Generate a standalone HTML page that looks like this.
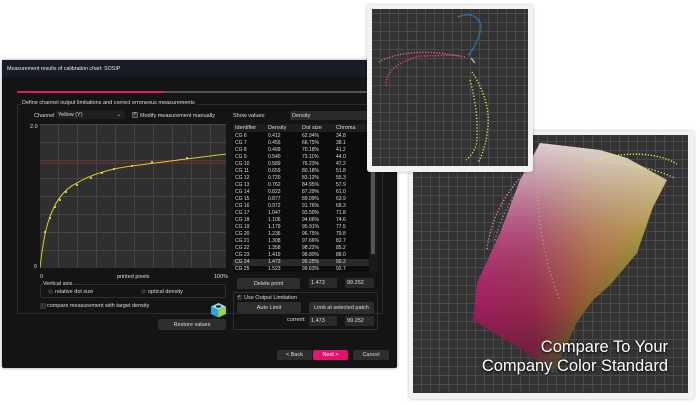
<!DOCTYPE html>
<html><head><meta charset="utf-8"><style>
*{margin:0;padding:0;box-sizing:border-box}
body{width:700px;height:405px;background:#fff;position:relative;overflow:hidden;font-family:"Liberation Sans",sans-serif;}
.a{position:absolute}
.t{position:absolute;color:#ddd;font-size:5.5px;white-space:nowrap;line-height:1}
.btn{position:absolute;background:#2e2e2e;border-radius:2px;color:#ddd;font-size:5.5px;text-align:center;display:flex;align-items:center;justify-content:center}
.fld{position:absolute;background:#2a2a2a;color:#ddd;font-size:5.5px;padding-left:2px;display:flex;align-items:center;border-radius:1px}
.grid{background-color:#383838;background-image:repeating-linear-gradient(0deg,transparent 0 8px,#4a4a4a 8px 9px),repeating-linear-gradient(90deg,transparent 0 8px,#4a4a4a 8px 9px)}
</style></head><body>
<div class="a" style="left:2px;top:60px;width:395px;height:308px;background:#141414;border-radius:2px;box-shadow:0 0 3px rgba(0,0,0,.4)"></div>
<div class="a" style="left:2px;top:60px;width:395px;height:17px;background:#181c24"></div>
<div class="t" style="left:7px;top:67px;font-size:5.3px;color:#e8e8e8">Measurement results of calibration chart: SOSIP</div>
<div class="a" style="left:17px;top:91px;width:366px;height:2px;background:#555"></div>
<div class="a" style="left:17px;top:91px;width:146px;height:2px;background:#e01a6a"></div>
<div class="a" style="left:17px;top:104px;width:366px;height:210px;border:1px solid #2c2c2c"></div>
<div class="t" style="left:21px;top:101px;background:#141414;padding:0 1px">Define channel output limitations and correct erroneous measurements</div>
<div class="t" style="left:34px;top:114px">Channel</div>
<div class="fld" style="left:56px;top:110px;width:69px;height:9px;background:#1f1f1f">Yellow (Y)<span style="position:absolute;right:4px;font-size:5px">⌄</span></div>
<div class="a" style="left:132px;top:112px;width:6px;height:6px;background:#333;border:1px solid #666"></div>
<div class="t" style="left:133px;top:112px;font-size:5px">✓</div>
<div class="t" style="left:140px;top:114px">Modify measurement manually</div>
<div class="t" style="left:30px;top:125px">2.0</div>
<div class="t" style="left:34px;top:265px">0</div>
<div class="a" style="left:40px;top:124px;width:186px;height:144px;background-image:repeating-linear-gradient(0deg,transparent 0 17px,#454545 17px 18px),repeating-linear-gradient(90deg,transparent 0 18px,#454545 18px 19px);background-color:#2f2f2f"></div>
<svg class="a" style="left:40px;top:124px" width="186" height="144" viewBox="40 124 186 144">
<line x1="40" y1="163" x2="226" y2="163" stroke="#c02020" stroke-width=".7"/>
<path d="M40 268 C42 250 44 238 46 230 C52 205 62 190 77 183 C95 172 120 167 140 165 C170 161 200 157 227 154" fill="none" stroke="#d8d020" stroke-width="1"/>
<g fill="#f0ee80"><circle cx="45" cy="232" r="1"/><circle cx="50" cy="218" r="1"/><circle cx="55" cy="207" r="1"/><circle cx="60" cy="200" r="1"/><circle cx="66" cy="192" r="1"/><circle cx="77" cy="185" r="1"/><circle cx="91" cy="178" r="1"/><circle cx="102" cy="173" r="1"/><circle cx="114" cy="169" r="1"/><circle cx="132" cy="166" r="1"/><circle cx="152" cy="162" r="1"/><circle cx="187" cy="158" r="1"/><circle cx="227" cy="154" r="1"/></g>
</svg>
<div class="t" style="left:40px;top:275px">0</div>
<div class="t" style="left:117px;top:275px">printed pixels</div>
<div class="t" style="left:214px;top:275px">100%</div>
<div class="a" style="left:40px;top:284px;width:186px;height:14px;border:1px solid #2e2e2e;border-radius:2px"></div>
<div class="t" style="left:43px;top:282px;background:#141414">Vertical axis</div>
<div class="a" style="left:48px;top:289px;width:5px;height:5px;border-radius:50%;background:#333"></div>
<div class="t" style="left:55px;top:290px">relative dot size</div>
<div class="a" style="left:141px;top:289px;width:5px;height:5px;border-radius:50%;background:#333"></div>
<div class="t" style="left:148px;top:290px">optical density</div>
<div class="a" style="left:40px;top:303px;width:6px;height:6px;background:#333"></div>
<div class="t" style="left:47px;top:304px">compare measurement with target density</div>
<svg class="a" style="left:210px;top:302px" width="17" height="16" viewBox="0 0 17 16">
<polygon points="8.5,1 16,4.5 8.5,8 1,4.5" fill="#8fe0f0"/><polygon points="1,4.5 8.5,8 8.5,15.5 1,12" fill="#28a8e0"/><polygon points="16,4.5 8.5,8 8.5,15.5 16,12" fill="#a8d030"/><ellipse cx="8.5" cy="4.5" rx="2.5" ry="1.2" fill="#1a1a1a"/></svg>
<div class="btn" style="left:158px;top:319px;width:68px;height:11px">Restore values</div>
<div class="t" style="left:233px;top:114px">Show values:</div>
<div class="fld" style="left:290px;top:111px;width:80px;height:9px">Density</div>
<div class="a" style="left:233px;top:124px;width:136px;height:148px;background:#0c0c0c"></div>
<div class="a" style="left:233px;top:124px;width:136px;height:8px;background:#1e1e1e"></div>
<div class="a" style="left:233px;top:259px;width:136px;height:7px;background:#2a2a2a"></div>
<div class="a" style="left:370px;top:124px;width:7px;height:148px;background:#1a1a1a"></div>
<div class="a" style="left:371px;top:126px;width:4px;height:128px;background:#555"></div>
<div id="tbl"></div>
<div class="btn" style="left:237px;top:278px;width:63px;height:11px">Delete point</div>
<div class="fld" style="left:309px;top:278px;width:28px;height:10px">1.473</div>
<div class="fld" style="left:345px;top:278px;width:29px;height:10px">99.252</div>
<div class="a" style="left:233px;top:292px;width:145px;height:38px;border:1px solid #2e2e2e;border-radius:2px"></div>
<div class="a" style="left:237px;top:295px;width:5px;height:5px;background:#333"></div>
<div class="t" style="left:237px;top:295px;font-size:5px">✓</div>
<div class="t" style="left:244px;top:296px">Use Output Limitation</div>
<div class="btn" style="left:237px;top:302px;width:64px;height:11px">Auto Limit</div>
<div class="btn" style="left:309px;top:302px;width:65px;height:11px">Limit at selected patch</div>
<div class="t" style="left:287px;top:318px">current:</div>
<div class="fld" style="left:309px;top:316px;width:28px;height:10px">1.473</div>
<div class="fld" style="left:345px;top:316px;width:29px;height:10px">99.252</div>
<div class="btn" style="left:277px;top:350px;width:35px;height:10px">&lt; Back</div>
<div class="btn" style="left:313px;top:350px;width:35px;height:10px;background:#e0146c;color:#fff">Next &gt;</div>
<div class="btn" style="left:353px;top:350px;width:36px;height:10px">Cancel</div>

<div class="a" style="left:409px;top:131px;width:285px;height:268px;background:#f2f2f2;border-radius:3px;box-shadow:0 0 3px rgba(0,0,0,.25)"></div>
<div class="a grid" style="left:413px;top:135px;width:275px;height:258px;background-color:#333"></div>
<svg class="a" style="left:413px;top:135px" width="275" height="258" viewBox="413 135 275 258">
<defs>
<linearGradient id="g1" x1="0" y1="0" x2="1" y2="0"><stop offset="0" stop-color="#c0207a"/><stop offset=".3" stop-color="#b03060"/><stop offset=".6" stop-color="#b87040"/><stop offset="1" stop-color="#c09a20"/></linearGradient>
<linearGradient id="g2" x1="0" y1="0" x2="0" y2="1"><stop offset="0" stop-color="#e8e8e8" stop-opacity=".85"/><stop offset=".4" stop-color="#ccc" stop-opacity=".2"/><stop offset=".7" stop-color="#400" stop-opacity=".15"/><stop offset="1" stop-color="#301030" stop-opacity=".6"/></linearGradient>
<linearGradient id="g3" x1="0" y1="0" x2="1" y2="1"><stop offset=".6" stop-color="#0a0" stop-opacity="0"/><stop offset=".8" stop-color="#2a9a30" stop-opacity=".55"/><stop offset="1" stop-color="#2a9a30" stop-opacity="0"/></linearGradient>
</defs>
<g id="bl">
<polygon points="540,143 600,150 627,158 667,180 653,207 637,253 610,285 593,300 577,322 553,373 527,353 473,320 477,283 500,233 520,180" fill="url(#g1)" opacity=".9"/>
<polygon points="540,143 600,150 627,158 667,180 653,207 637,253 610,285 593,300 577,322 553,373 527,353 473,320 477,283 500,233 520,180" fill="url(#g2)"/>
<polygon points="540,143 600,150 627,158 667,180 653,207 637,253 610,285 593,300 577,322 553,373 527,353 473,320 477,283 500,233 520,180" fill="url(#g3)"/>
</g>
<path d="M585 161 Q640 162 675 178" fill="none" stroke="#f0e070" stroke-width="1.3" stroke-dasharray="1.2 2"/>
<path d="M600 158 Q650 148 677 164" fill="none" stroke="#f0f040" stroke-width="1.4" stroke-dasharray="1.2 1.8"/>
<path d="M487 249 Q492 210 520 178" fill="none" stroke="#f080c0" stroke-width="1.4" stroke-dasharray="1.2 2"/>
<path d="M495 240 Q505 200 535 170" fill="none" stroke="#c0a0d0" stroke-width="1.1" stroke-dasharray="1 2.5"/>
<path d="M537 160 Q535 240 560 300" fill="none" stroke="#e0a0c0" stroke-width="1.1" stroke-dasharray="1 3"/>
</svg>
<div class="t" style="left:470px;top:338px;width:198px;text-align:right;font-size:16.5px;color:#fff;text-shadow:0 1px 2px #000;line-height:19px">Compare To Your<br>Company Color Standard</div>

<div class="a" style="left:367px;top:5px;width:166px;height:167px;background:#f2f2f2;border-radius:3px;box-shadow:0 0 3px rgba(0,0,0,.25)"></div>
<div class="a grid" style="left:372px;top:9px;width:156px;height:157px;background-color:#333"></div>
<svg class="a" style="left:372px;top:9px" width="156" height="157" viewBox="372 9 156 157">
<path d="M458 17 Q475 10 481 25 Q480 40 468 56" fill="none" stroke="#2a90d0" stroke-width="1.6" stroke-dasharray="1.2 1"/>
<path d="M379 62 Q400 50 440 53 L465 57" fill="none" stroke="#e060a0" stroke-width="1.5" stroke-dasharray="1.2 1.6"/>
<path d="M386 86 Q385 65 420 56 L460 55" fill="none" stroke="#e04090" stroke-width="1.5" stroke-dasharray="1.2 1.6"/>
<path d="M472 72 Q490 100 488 125 Q487 145 478 163" fill="none" stroke="#e8e040" stroke-width="1.5" stroke-dasharray="1.2 1.8"/>
<path d="M470 80 Q478 110 477 135 Q478 150 466 160" fill="none" stroke="#e0e050" stroke-width="1.5" stroke-dasharray="1.2 2"/>
<line x1="471" y1="58" x2="475" y2="63" stroke="#bbb" stroke-width="1.4"/>
</svg>
<script>
var d=[["CG 6","0.412","62.94%","34.8"],["CG 7","0.456","66.75%","38.1"],["CG 8","0.499","70.18%","41.2"],["CG 9","0.540","73.11%","44.0"],["CG 10","0.589","76.23%","47.2"],["CG 11","0.659","80.18%","51.8"],["CG 12","0.720","83.12%","55.3"],["CG 13","0.762","84.95%","57.9"],["CG 14","0.823","87.29%","61.0"],["CG 15","0.877","89.09%","63.9"],["CG 16","0.972","91.76%","68.3"],["CG 17","1.047","93.50%","71.8"],["CG 18","1.106","94.66%","74.6"],["CG 19","1.179","95.91%","77.5"],["CG 20","1.236","96.75%","79.8"],["CG 21","1.308","97.66%","82.7"],["CG 22","1.358","98.22%","85.2"],["CG 23","1.419","98.80%","88.0"],["CG 24","1.473","99.25%","90.2"],["CG 25","1.523","99.63%","92.7"]];
var h="",xs=[235,268,302,336],hd=["Identifier","Density","Dot size","Chroma"];
for(var j=0;j<4;j++)h+='<div class="t" style="left:'+xs[j]+'px;top:126px">'+hd[j]+'</div>';
for(var i=0;i<d.length;i++)for(j=0;j<4;j++)h+='<div class="t" style="left:'+xs[j]+'px;top:'+(134+i*7)+'px;font-size:5px">'+d[i][j]+'</div>';
document.getElementById("tbl").innerHTML=h;
</script>
</body></html>
